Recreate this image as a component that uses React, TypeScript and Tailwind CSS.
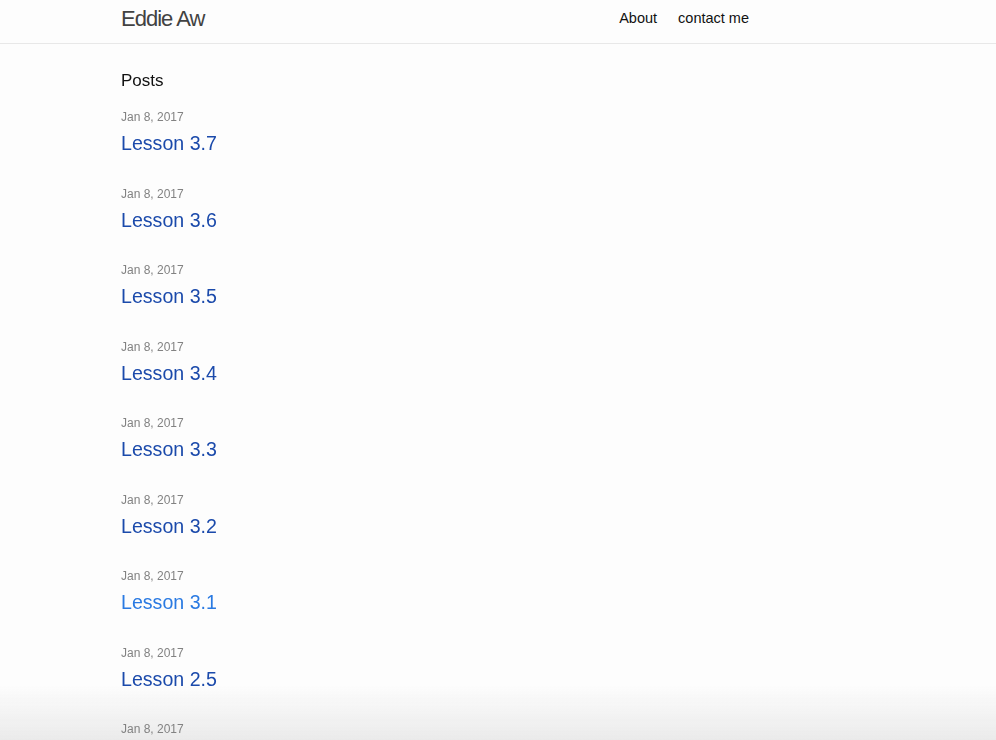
const posts = [
  { title: "Lesson 3.7" },
  { title: "Lesson 3.6" },
  { title: "Lesson 3.5" },
  { title: "Lesson 3.4" },
  { title: "Lesson 3.3" },
  { title: "Lesson 3.2" },
  { title: "Lesson 3.1", fresh: true },
  { title: "Lesson 2.5" },
  { title: "Lesson 2.4" },
];

export default function App() {
  return (
    <div
      className="min-h-screen bg-[#fdfdfd] text-[#111111]"
      style={{ fontFamily: '"Liberation Sans", Arial, sans-serif' }}
    >
      {/* soft shade at the bottom of the window, behind the text */}
      <div className="fixed left-0 right-0 bottom-0 h-[55px] z-0 pointer-events-none bg-gradient-to-b from-[#fdfdfd00] to-[#eaeaea]" />

      <header className="relative z-10 h-[44px] border-b border-[#e8e8e8]">
        <div className="ml-[121px] w-[628px] flex items-start justify-between">
          <a className="text-[22px] leading-[37px] tracking-[-1px] text-[#424242]">
            Eddie Aw
          </a>
          <nav className="flex gap-[21px] text-[14.5px] leading-[37px] text-[#111111]">
            <a>About</a>
            <a>contact me</a>
          </nav>
        </div>
      </header>

      <main className="relative z-10 ml-[121px] pt-[25px]">
        <h2 className="text-[17px] leading-[24px] mb-[15px]">Posts</h2>
        <ul>
          {posts.map((p, i) => (
            <li key={i} className="mb-[28.5px]">
              <div className="text-[12px] leading-[18px] text-[#828282] mb-[4px]">
                Jan 8, 2017
              </div>
              <a
                className={
                  p.fresh
                    ? "block text-[19.6px] leading-[26px] text-[#2a7ae2]"
                    : "block text-[19.6px] leading-[26px] text-[#1b4aab]"
                }
              >
                {p.title}
              </a>
            </li>
          ))}
        </ul>
      </main>
    </div>
  );
}
